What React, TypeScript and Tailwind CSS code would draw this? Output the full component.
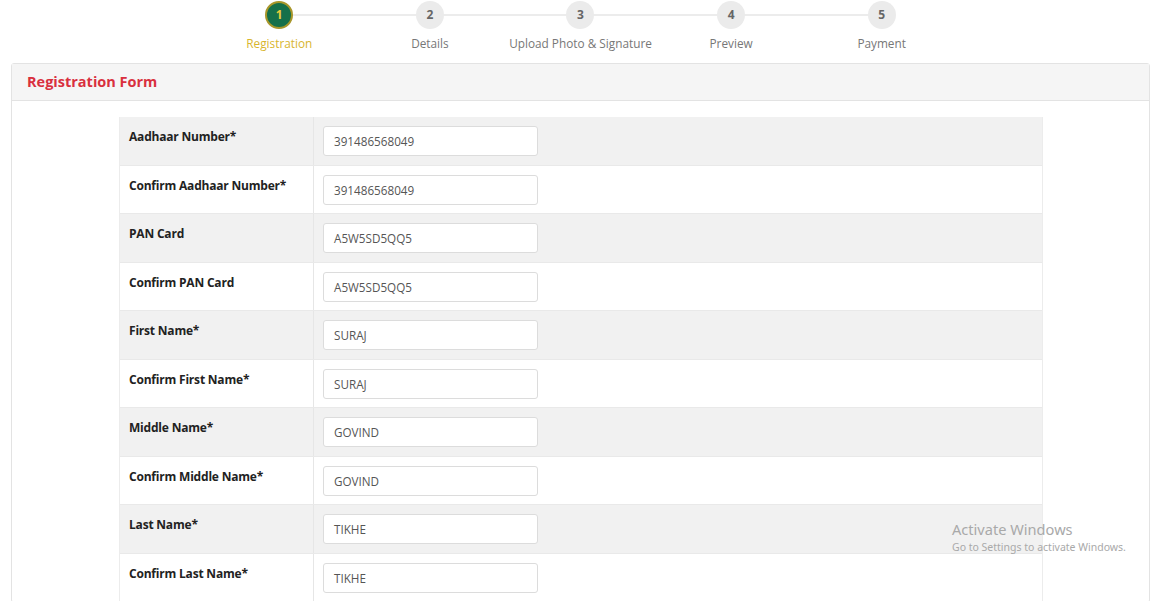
import React from "react";

const steps = ["Registration", "Details", "Upload Photo & Signature", "Preview", "Payment"];

const rows: [string, string][] = [
  ["Aadhaar Number*", "391486568049"],
  ["Confirm Aadhaar Number*", "391486568049"],
  ["PAN Card", "A5W5SD5QQ5"],
  ["Confirm PAN Card", "A5W5SD5QQ5"],
  ["First Name*", "SURAJ"],
  ["Confirm First Name*", "SURAJ"],
  ["Middle Name*", "GOVIND"],
  ["Confirm Middle Name*", "GOVIND"],
  ["Last Name*", "TIKHE"],
  ["Confirm Last Name*", "TIKHE"],
];

export default function App() {
  return (
    <div
      className="relative w-[1161px] h-[601px] overflow-hidden bg-white"
      style={{ fontFamily: '"Open Sans", "Noto Sans", sans-serif' }}
    >
      {/* Stepper */}
      <div className="flex justify-center pt-[1px]">
        <div className="flex w-[753px]">
          {steps.map((s, i) => (
            <div key={s} className="relative flex w-[150.6px] flex-col items-center">
              {i < steps.length - 1 && (
                <div className="absolute left-1/2 top-[13px] h-[2px] w-full bg-[#ececec]" />
              )}
              {i === 0 ? (
                <div className="relative z-10 flex h-[28px] w-[28px] items-center justify-center rounded-full border-2 border-[#a8962a] bg-[#16704a] text-[12px] font-bold text-[#e6cb3c]">
                  1
                </div>
              ) : (
                <div className="relative z-10 flex h-[28px] w-[28px] items-center justify-center rounded-full bg-[#ebebeb] text-[12px] font-bold text-[#666]">
                  {i + 1}
                </div>
              )}
              <div
                className={`mt-[6px] whitespace-nowrap text-[11.8px] leading-[16px] ${
                  i === 0 ? "text-[#d8b52e]" : "text-[#777]"
                }`}
              >
                {s}
              </div>
            </div>
          ))}
        </div>
      </div>

      {/* Card */}
      <div className="mx-[11px] mt-[12px] rounded-[3px] border border-[#e3e3e3]">
        <div className="flex h-[37px] items-center border-b border-[#e3e3e3] bg-[#f5f5f5] pl-[15px]">
          <h2 className="text-[14.5px] font-bold text-[#d9303e]">Registration Form</h2>
        </div>
        <div className="pt-[16px]">
          <div className="ml-[107px] w-[924px] border-x border-[#ececec]">
            {rows.map(([label, value], i) => (
              <div
                key={label}
                className={`flex h-[48.5px] border-b border-[#e9e9e9] ${
                  i % 2 === 0 ? "bg-[#f1f1f1]" : "bg-white"
                }`}
              >
                <div className="w-[194px] shrink-0 border-r border-[#e6e6e6] pl-[9px] pt-[12px] text-[12px] font-bold leading-[16px] tracking-[-0.2px] text-[#222]">
                  {label}
                </div>
                <div className="flex-1 pl-[9px] pt-[9px]">
                  <div className="flex h-[30px] w-[215px] items-center rounded-[3px] border border-[#dcdcdc] bg-white pl-[10px] pt-[2px] text-[11.7px] text-[#555]">
                    {value}
                  </div>
                </div>
              </div>
            ))}
          </div>
        </div>
      </div>

      {/* Windows watermark */}
      <div
        className="pointer-events-none absolute left-[952px] top-[519px] text-[#a9a9a9]"
        style={{ fontFamily: '"Noto Sans", "Open Sans", sans-serif' }}
      >
        <div className="text-[14.6px] leading-[20px]">Activate Windows</div>
        <div className="text-[10.5px] leading-[14px] mt-[1px]">Go to Settings to activate Windows.</div>
      </div>
    </div>
  );
}
